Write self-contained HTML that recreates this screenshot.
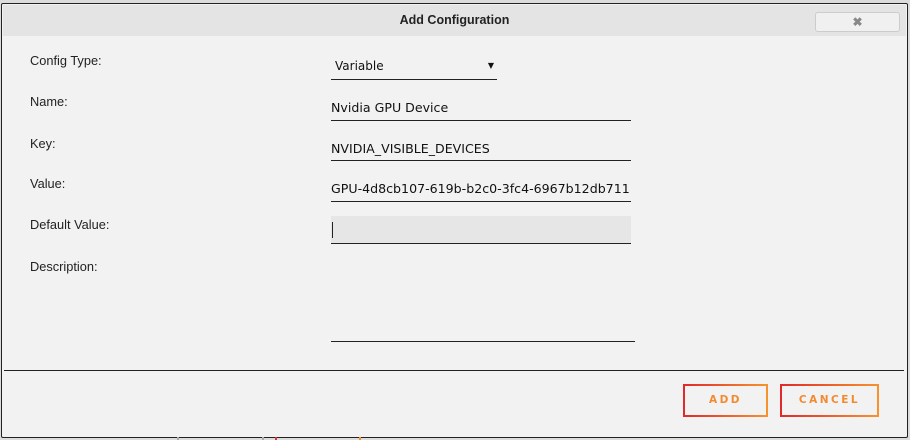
<!DOCTYPE html>
<html><head><style>
body{margin:0;width:910px;height:440px;background:#dcdcdc;font-family:"Liberation Sans",sans-serif;position:relative;overflow:hidden}
.dlg{position:absolute;left:1px;top:3px;width:905px;height:433px;border:1px solid #222;background:#f2f2f2;border-radius:2px}
.title{position:absolute;left:3px;top:5px;width:903px;height:31px;background:#e4e4e4;text-align:center;line-height:31px;font-size:12.5px;font-weight:bold;color:#222}
.close{position:absolute;left:815px;top:12px;width:83px;height:18px;background:#f0f0f0;border:1px solid #ccc;border-radius:3px;text-align:center;line-height:18px;font-size:12px;color:#888;font-weight:bold}
.lab{position:absolute;left:30px;font-size:12.8px;color:#222}
.inp{position:absolute;left:331px;width:300px;border-bottom:1px solid #222;font-family:"DejaVu Sans",sans-serif;font-size:12.6px;color:#111;padding-left:0}
.div{position:absolute;left:4px;top:370px;width:900px;height:1px;background:#222}
.btn{position:absolute;top:384px;height:33px;border:2px solid;border-image:linear-gradient(90deg,#e02a2a,#f7922e) 1;box-sizing:border-box;text-align:center;line-height:29px;font-family:"DejaVu Sans",sans-serif;font-size:10.5px;font-weight:bold;letter-spacing:2.5px;color:#f28a30}
.mk{position:absolute;top:437px;width:2px;height:3px}
</style></head><body>
<div class="dlg"></div>
<div class="title">Add Configuration</div>
<div class="close">✖</div>
<div class="lab" style="top:53px">Config Type:</div>
<div class="lab" style="top:94px">Name:</div>
<div class="lab" style="top:136px">Key:</div>
<div class="lab" style="top:176px">Value:</div>
<div class="lab" style="top:217px">Default Value:</div>
<div class="lab" style="top:259px">Description:</div>
<div class="inp" style="top:52px;width:162px;height:27px;line-height:28px;padding-left:4px;font-size:12px">Variable<span style="position:absolute;right:3px;font-size:8px">▼</span></div>
<div class="inp" style="top:96px;height:24px;line-height:24px">Nvidia GPU Device</div>
<div class="inp" style="top:137px;height:23px;line-height:23px">NVIDIA_VISIBLE_DEVICES</div>
<div class="inp" style="top:177px;height:24px;line-height:24px">GPU-4d8cb107-619b-b2c0-3fc4-6967b12db711</div>
<div class="inp" style="top:216px;height:27px;background:#e6e6e6"><div style="position:absolute;left:1px;top:6px;width:1px;height:16px;background:#222"></div></div>
<div class="inp" style="top:260px;height:81px;width:304px"></div>
<div class="div"></div>
<div class="btn" style="left:683px;width:85px">ADD</div>
<div class="btn" style="left:780px;width:99px">CANCEL</div>
<div class="mk" style="left:177px;background:#aaa"></div>
<div class="mk" style="left:262px;background:#aaa"></div>
<div class="mk" style="left:275px;background:#e03030"></div>
<div class="mk" style="left:359px;background:#f29030"></div>
</body></html>
